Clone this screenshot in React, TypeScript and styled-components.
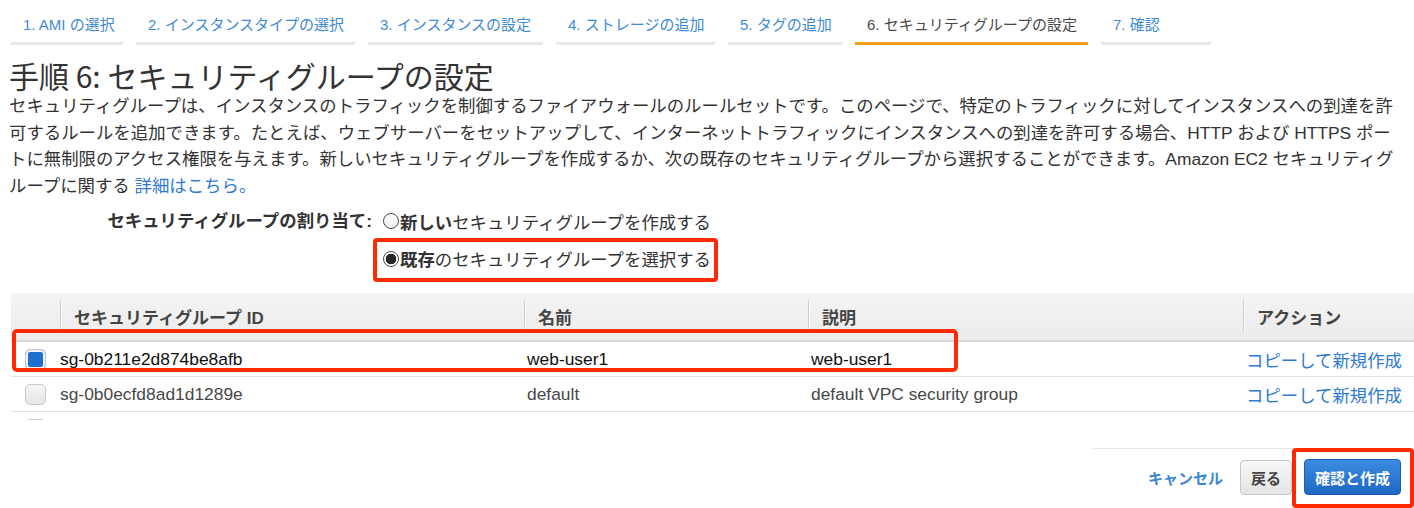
import React from "react";
import styled, { createGlobalStyle } from "styled-components";

const RED = "#ff2a00";
const LINK = "#2f7ad3";

const GlobalStyle = createGlobalStyle`
  html, body {
    margin: 0;
    padding: 0;
    overflow: hidden;
    background: #fff;
  }
  body {
    font-family: "Liberation Sans", "Noto Sans CJK JP", sans-serif;
    color: #333;
  }
`;

const tabs = [
  { label: "1. AMI の選択", width: 112 },
  { label: "2. インスタンスタイプの選択", width: 219 },
  { label: "3. インスタンスの設定", width: 175 },
  { label: "4. ストレージの追加", width: 159 },
  { label: "5. タグの追加", width: 114 },
  { label: "6. セキュリティグループの設定", width: 233, active: true },
  { label: "7. 確認", width: 110 },
];

const rows = [
  { id: "sg-0b211e2d874be8afb", name: "web-user1", desc: "web-user1", checked: true },
  { id: "sg-0b0ecfd8ad1d1289e", name: "default", desc: "default VPC security group", checked: false },
  { id: "", name: "", desc: "", checked: false, empty: true },
];

const App = () => (
  <Page>
    <GlobalStyle />
    <TabBar>
      {tabs.map((t) => (
        <Tab key={t.label} $active={!!t.active} style={{ width: t.width }}>
          {t.label}
        </Tab>
      ))}
    </TabBar>

    <Title>手順 6: セキュリティグループの設定</Title>
    <Intro>
      セキュリティグループは、インスタンスのトラフィックを制御するファイアウォールのルールセットです。このページで、特定のトラフィックに対してインスタンスへの到達を許
      <br />
      可するルールを追加できます。たとえば、ウェブサーバーをセットアップして、インターネットトラフィックにインスタンスへの到達を許可する場合、HTTP および HTTPS ポー
      <br />
      トに無制限のアクセス権限を与えます。新しいセキュリティグループを作成するか、次の既存のセキュリティグループから選択することができます。Amazon EC2 セキュリティグ
      <br />
      ループに関する <TextLink>詳細はこちら。</TextLink>
    </Intro>

    <Assign>
      <AssignLabel>セキュリティグループの割り当て:</AssignLabel>
      <Options>
        <Option>
          <Radio $checked={false} />
          <span>
            <b>新しい</b>セキュリティグループを作成する
          </span>
        </Option>
        <Option $boxed>
          <Radio $checked />
          <span>
            <b>既存</b>のセキュリティグループを選択する
          </span>
        </Option>
      </Options>
    </Assign>

    <TableWrap>
      <TableScroll>
        <HeadRow>
          <HeadCell />
          <HeadCell $sep>セキュリティグループ ID</HeadCell>
          <HeadCell $sep>名前</HeadCell>
          <HeadCell $sep>説明</HeadCell>
          <HeadCell $sep>アクション</HeadCell>
        </HeadRow>
        {rows.map((r, i) => (
          <Row key={i}>
            <CheckCell>
              <Check $checked={r.checked} />
            </CheckCell>
            <Cell $strong={r.checked} $pad={0}>{r.id}</Cell>
            <Cell $strong={r.checked}>{r.name}</Cell>
            <Cell $strong={r.checked}>{r.desc}</Cell>
            <Cell>{!r.empty && <ActionLink>コピーして新規作成</ActionLink>}</Cell>
          </Row>
        ))}
      </TableScroll>
      <RowHighlight />
    </TableWrap>

    <Footer>
      <Cancel>キャンセル</Cancel>
      <BackButton>戻る</BackButton>
      <Highlighted>
        <PrimaryButton>確認と作成</PrimaryButton>
      </Highlighted>
    </Footer>
  </Page>
);

export default App;

const Page = styled.div`
  width: 1414px;
  height: 508px;
  overflow: hidden;
`;

const TabBar = styled.nav`
  display: flex;
  gap: 13px;
  padding-left: 11px;
`;

const Tab = styled.div<{ $active: boolean }>`
  box-sizing: border-box;
  padding: 15px 12px 7px;
  line-height: 20px;
  font-size: 15px;
  white-space: nowrap;
  color: ${(p) => (p.$active ? "#4a4a4a" : "#3f8ad6")};
  border-bottom: 3px solid ${(p) => (p.$active ? "#f89c1c" : "#e9e9e9")};
`;

const Title = styled.h1`
  margin: 12px 0 0;
  padding-left: 9px;
  font-family: "Noto Sans CJK JP", sans-serif;
  font-weight: 400;
  font-size: 30px;
  line-height: 36px;
  color: #333;
`;

const Intro = styled.p`
  margin: 0;
  padding-left: 9px;
  font-size: 17.4px;
  line-height: 26.5px;
  white-space: nowrap;
  color: #333;
`;

const TextLink = styled.span`
  color: ${LINK};
`;

const Assign = styled.div`
  display: grid;
  grid-template-columns: 373px auto;
  margin-top: 9px;
  font-size: 17.4px;
`;

const AssignLabel = styled.div`
  text-align: right;
  padding-right: 1px;
  font-weight: 700;
  line-height: 26px;
  color: #333;
`;

const Options = styled.div`
  display: flex;
  flex-direction: column;
  align-items: flex-start;
  gap: 4px;
`;

const Option = styled.label<{ $boxed?: boolean }>`
  display: inline-flex;
  align-items: center;
  gap: 1px;
  color: #333;
  white-space: nowrap;
  ${(p) =>
    p.$boxed
      ? `
    padding: 0 3px 3px 6px;
    box-sizing: content-box;
    border: 4px solid ${RED};
    border-radius: 4px;
    height: 33px;
  `
      : `
    height: 26px;
    padding-left: 10px;
  `}
  b {
    font-weight: 700;
  }
`;

const Radio = styled.span<{ $checked: boolean }>`
  width: 16px;
  height: 16px;
  box-sizing: border-box;
  border-radius: 50%;
  border: 1px solid #4a4a4a;
  background: ${(p) =>
    p.$checked
      ? "radial-gradient(circle, #262626 0 5px, #fff 5.6px)"
      : "linear-gradient(#fff, #f1f1f1)"};
  flex: none;
`;

const TableWrap = styled.div`
  position: relative;
  margin: 11px 0 0 11px;
`;

const TableScroll = styled.div`
  height: 127px;
  overflow: hidden;
`;

const columns = "49px 464px 284px 435px 1fr";

const HeadRow = styled.div`
  display: grid;
  grid-template-columns: ${columns};
  height: 47px;
  background: linear-gradient(#f4f4f4, #ebebeb);
  border-bottom: 2px solid #dadada;
`;

const HeadCell = styled.div<{ $sep?: boolean }>`
  position: relative;
  display: flex;
  align-items: center;
  padding-left: 14px;
  font-size: 17px;
  font-weight: 700;
  color: #444;
  white-space: nowrap;
  ${(p) =>
    p.$sep &&
    `
    &::before {
      content: "";
      position: absolute;
      left: 0;
      top: 7px;
      bottom: 8px;
      border-left: 1px solid #cfcfcf;
      box-shadow: 1px 0 0 #fafafa;
    }
  `}
`;

const Row = styled.div`
  display: grid;
  grid-template-columns: ${columns};
  height: 34px;
  border-bottom: 1px solid #e1e1e1;
  background: #fff;
`;

const CheckCell = styled.div`
  display: flex;
  align-items: center;
  justify-content: center;
`;

const Check = styled.span<{ $checked: boolean }>`
  width: 21px;
  height: 21px;
  box-sizing: border-box;
  border-radius: 5px;
  border: 1px solid ${(p) => (p.$checked ? "#b8c4d4" : "#cacaca")};
  background: ${(p) =>
    p.$checked ? "#1f6fd0" : "linear-gradient(#f7f7f7, #e6e6e6)"};
  box-shadow: ${(p) => (p.$checked ? "inset 0 0 0 2px #f4f4f4" : "none")};
`;

const Cell = styled.div<{ $strong?: boolean; $pad?: number }>`
  display: flex;
  align-items: center;
  padding-left: ${(p) => (p.$pad ?? 3)}px;
  font-size: 17.4px;
  white-space: nowrap;
  color: ${(p) => (p.$strong ? "#111" : "#474747")};
`;

const ActionLink = styled.span`
  color: ${LINK};
  font-size: 17.4px;
`;

const RowHighlight = styled.div`
  position: absolute;
  left: 1px;
  top: 36px;
  width: 946px;
  height: 43px;
  box-sizing: border-box;
  border: 4px solid ${RED};
  border-radius: 5px;
  pointer-events: none;
`;

const Footer = styled.div`
  display: flex;
  align-items: center;
  justify-content: flex-end;
  width: 321px;
  margin: 28px 0 0 auto;
  padding: 10px 13px 0 0;
  box-sizing: border-box;
  border-top: 1px solid #e6e6e6;
`;

const Cancel = styled.span`
  margin-right: 17px;
  font-size: 15px;
  font-weight: 700;
  color: #3a86d6;
`;

const BackButton = styled.button`
  height: 35px;
  padding: 0 10px;
  font-family: inherit;
  font-size: 15px;
  font-weight: 700;
  color: #444;
  background: linear-gradient(#f8f8f8, #e4e4e4);
  border: 1px solid #c6c6c6;
  border-radius: 4px;
`;

const Highlighted = styled.div`
  position: relative;
  margin-left: 12px;
  &::after {
    content: "";
    position: absolute;
    inset: -11px -13px -13px -12px;
    border: 4px solid ${RED};
    border-radius: 4px;
    pointer-events: none;
  }
`;

const PrimaryButton = styled.button`
  display: block;
  height: 36px;
  padding: 0 10px;
  font-family: inherit;
  font-size: 15px;
  font-weight: 700;
  color: #fff;
  background: linear-gradient(#3c8ce2, #1d68c4);
  border: 1px solid #1a5fb4;
  border-radius: 4px;
`;
